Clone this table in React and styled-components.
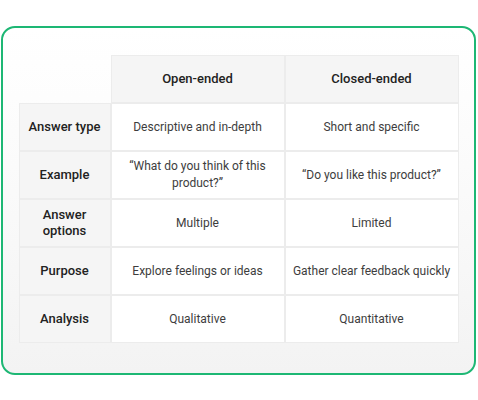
import React from 'react';
import styled, { createGlobalStyle } from 'styled-components';

const GlobalStyle = createGlobalStyle`
	body {
		margin: 0;
		background: #ffffff;
		font-family: Roboto, "Liberation Sans", sans-serif;
	}
`;

const Page = styled.div`
	padding: 26px 2px 0 1px;
`;

const Card = styled.div`
	border: 2px solid #1db774;
	border-radius: 14px;
	background: linear-gradient(180deg, #ffffff 0%, #fbfbfb 40%, #f3f3f3 100%);
	padding: 28px 16px 31px 16px;
`;

const Grid = styled.div`
	display: grid;
	grid-template-columns: 90px 172px 172px;
	grid-auto-rows: 46px;
	gap: 2px;
	justify-content: center;
`;

const Cell = styled.div`
	display: flex;
	align-items: center;
	justify-content: center;
	text-align: center;
	white-space: ${p => (p.$nowrap ? 'nowrap' : 'normal')};
	box-shadow: ${p => (p.$empty ? 'none' : '0 0 0 1px #ececec')};
	background: ${p => (p.$empty ? 'transparent' : p.$shade ? '#f5f5f5' : '#ffffff')};
	color: ${p => (p.$bold ? '#222222' : '#3d3d3d')};
	font-size: ${p => (p.$bold ? '13px' : '12px')};
	font-weight: ${p => (p.$bold ? 500 : 400)};
	line-height: ${p => (p.$bold ? '16px' : '17px')};
	padding: 0 ${p => (p.$label ? '4px' : '10px')};
`;

const rows = [
	['Answer type', 'Descriptive and in-depth', 'Short and specific'],
	['Example', '\u201cWhat do you think of this product?\u201d', '\u201cDo you like this product?\u201d'],
	['Answer options', 'Multiple', 'Limited'],
	['Purpose', 'Explore feelings or ideas', 'Gather clear feedback quickly'],
	['Analysis', 'Qualitative', 'Quantitative'],
];

const App = () => (
	<>
		<GlobalStyle />
		<Page>
			<Card>
				<Grid>
					<Cell $empty />
					<Cell $shade $bold>Open-ended</Cell>
					<Cell $shade $bold>Closed-ended</Cell>
					{rows.map(r => (
						<React.Fragment key={r[0]}>
							<Cell $shade $bold $label>{r[0]}</Cell>
							<Cell>{r[1]}</Cell>
							<Cell $nowrap>{r[2]}</Cell>
						</React.Fragment>
					))}
				</Grid>
			</Card>
		</Page>
	</>
);

export default App;
